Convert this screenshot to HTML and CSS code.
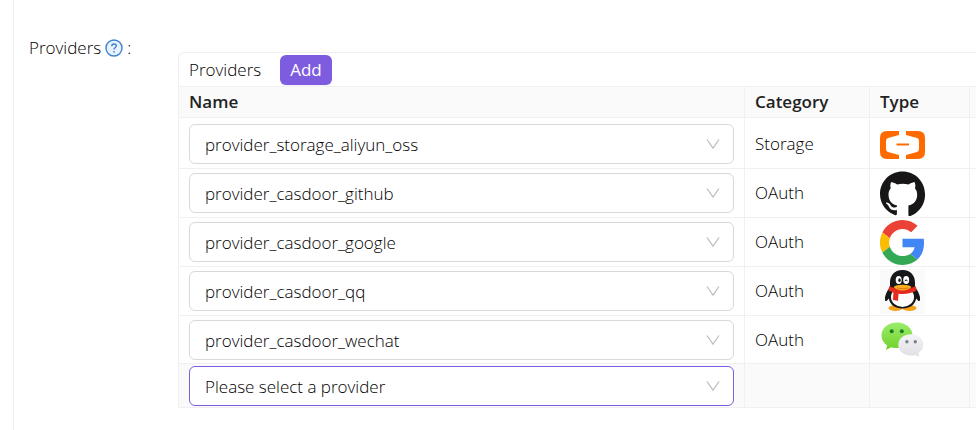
FILE: index.html
```html
<!DOCTYPE html>
<html lang="en">
<head>
<meta charset="utf-8">
<title>Providers</title>
<link rel="stylesheet" href="styles.css">
</head>
<body>
<main class="panel">
  <div class="field-label">Providers
    <svg class="help" viewBox="0 0 18 18" role="img" aria-label="Help"><circle cx="9" cy="9" r="8" fill="#e8f3ff" stroke="#3f82d0" stroke-width="1.4"/><path d="M6.700 7.200C6.700 5.700 7.600 5 9 5s2.300.8 2.300 2C11.300 8.500 9 8.500 9 10.500" fill="none" stroke="#3f82d0" stroke-width="1.4"/><circle cx="9" cy="12.800" r=".9" fill="#3f82d0"/></svg>
    :</div>
  <section class="providers">
    <div class="title"><span>Providers</span><button class="add" type="button">Add</button></div>
    <table>
      <colgroup><col><col class="col-category"><col class="col-type"><col class="col-more"></colgroup>
      <thead><tr><th>Name</th><th>Category</th><th>Type</th><th class="more"></th></tr></thead>
      <tbody>
        <tr class="first">
          <td><div class="select"><select aria-label="Storage provider"><option>provider_storage_aliyun_oss</option></select><svg viewBox="0 0 14 12"><path d="M1 1.500 7 10l6-8.500"/></svg></div></td>
          <td>Storage</td>
          <td><svg class="logo" viewBox="0 0 45 45"><g fill="#ff6a00"><path d="M19 9H7Q0 9 0 16v14q0 7 7 7h12v-4L8 30q-2-.6-2-3v-8q0-2.400 2-3l11-3z"/><path d="M26 9h12q7 0 7 7v14q0 7-7 7H26v-4l11-3q2-.6 2-3v-8q0-2.400-2-3l-11-3z"/><path d="M16.500 21.500h12.500v2H16.500z"/></g></svg></td>
          <td class="more"></td>
        </tr>
        <tr>
          <td><div class="select"><select aria-label="GitHub provider"><option>provider_casdoor_github</option></select><svg viewBox="0 0 14 12"><path d="M1 1.500 7 10l6-8.500"/></svg></div></td>
          <td>OAuth</td>
          <td><svg class="logo" viewBox="0 0 45 45"><path fill="#181617" d="M22.500.5C10 .5 0 10.500 0 23c0 9.900 6.400 18.200 15.400 21.200 1.100.2 1.500-.5 1.500-1.100v-4.200c-6.300 1.400-7.600-2.600-7.600-2.600-1-2.600-2.500-3.300-2.500-3.300-2-1.400.2-1.400.2-1.400 2.200.2 3.400 2.300 3.400 2.300 2 3.500 5.300 2.500 6.600 1.900v-1.400C12 33.800 8.500 30 8.500 23.300c0-2.500.9-4.500 2.300-6-.2-.6-1-2.900.2-6 0 0 1.900-.6 6.200 2.300a21 21 0 0 1 11.300 0c4.300-2.900 6.200-2.300 6.200-2.300 1.200 3.100.4 5.400.2 6a8.700 8.700 0 0 1 2.300 6c0 6.700-3.500 10.500-8.800 11.100v9.700c0 .6.400 1.300 1.500 1.100A22.500 22.500 0 0 0 45 23C45 10.500 35 .5 22.500.5Z"/></svg></td>
          <td class="more"></td>
        </tr>
        <tr>
          <td><div class="select"><select aria-label="Google provider"><option>provider_casdoor_google</option></select><svg viewBox="0 0 14 12"><path d="M1 1.500 7 10l6-8.500"/></svg></div></td>
          <td>OAuth</td>
          <td><svg class="logo" viewBox="0 0 48 48"><path fill="#ea4335" d="M24 9.500c3.540 0 6.710 1.220 9.210 3.600l6.850-6.850C35.900 2.380 30.470 0 24 0 14.620 0 6.510 5.380 2.560 13.220l7.980 6.190C12.430 13.720 17.740 9.500 24 9.500z"/><path fill="#4285f4" d="M46.980 24.550c0-1.570-.15-3.090-.38-4.550H24v9.020h12.940c-.58 2.960-2.260 5.480-4.780 7.180l7.730 6c4.510-4.180 7.090-10.360 7.090-17.650z"/><path fill="#fbbc05" d="M10.530 28.590a14.500 14.500 0 0 1 0-9.180l-7.980-6.190a24 24 0 0 0 0 21.560l7.980-6.190z"/><path fill="#34a853" d="M24 48c6.480 0 11.930-2.130 15.890-5.810l-7.730-6c-2.150 1.450-4.920 2.300-8.160 2.300-6.260 0-11.570-4.220-13.470-9.910l-7.980 6.190C6.510 42.620 14.620 48 24 48z"/></svg></td>
          <td class="more"></td>
        </tr>
        <tr>
          <td><div class="select"><select aria-label="QQ provider"><option>provider_casdoor_qq</option></select><svg viewBox="0 0 14 12"><path d="M1 1.500 7 10l6-8.500"/></svg></div></td>
          <td>OAuth</td>
          <td><svg class="logo" viewBox="0 0 45 45"><path fill="#fafafa" d="M0 0h45v45H0z"/><ellipse cx="15.500" cy="39" rx="7" ry="3" fill="#f5a11b"/><ellipse cx="29.500" cy="39" rx="7" ry="3" fill="#f5a11b"/><path fill="#161719" d="M22.500 1C14 1 10 7 10 13.500v4c-2.500 4-5.500 9-5 13 .2 2.500 1.600 2 3.800-1C10 36 15.300 39.500 22.500 39.500S35 36 36.200 29.500c2.200 3 3.600 3.500 3.800 1 .5-4-2.500-9-5-13v-4C35 7 31 1 22.500 1z"/><ellipse cx="22.500" cy="28" rx="11.500" ry="10" fill="#fff"/><path fill="#e52b1d" d="M9.500 17c8 4.500 18 4.500 26 0l1 4.500c-4.500 2.800-11 4-18 3.300l-.5 7-5-.7.4-7.500-5-2.100z"/><ellipse cx="18.700" cy="11" rx="3" ry="4" fill="#fff"/><ellipse cx="26.200" cy="11" rx="3" ry="4" fill="#fff"/><ellipse cx="19.500" cy="11.200" rx="1.200" ry="1.900" fill="#161719"/><path d="M24.800 12.200q1.400-3 2.600 0" fill="none" stroke="#161719"/><path fill="#fcae1d" d="M13.500 18c3-3 15-3 18 0-4 4.500-14 4.500-18 0z"/><path d="M17 19q5.500 1.500 11 0" fill="none" stroke="#cf6b16" stroke-width=".8"/></svg></td>
          <td class="more"></td>
        </tr>
        <tr class="tight">
          <td><div class="select"><select aria-label="WeChat provider"><option>provider_casdoor_wechat</option></select><svg viewBox="0 0 14 12"><path d="M1 1.500 7 10l6-8.500"/></svg></div></td>
          <td>OAuth</td>
          <td><svg class="logo" viewBox="0 0 45 45"><defs><linearGradient id="green" x2="0" y2="1"><stop stop-color="#9bec69"/><stop offset="1" stop-color="#70d22b"/></linearGradient><linearGradient id="silver" x2="0" y2="1"><stop stop-color="#f4f4f7"/><stop offset="1" stop-color="#dfdfe5"/></linearGradient></defs><path fill="url(#green)" d="M17 5.500C8 5.500 1.500 11 1.500 18.500c0 4.500 2.200 7.500 5.700 10L6 33l5.200-2.800c1.800.6 3.700.9 5.800.9 8.800 0 15.500-5.200 15.500-12.600S25.800 5.500 17 5.500z"/><circle cx="11.700" cy="14.300" r="2" fill="#187e28"/><circle cx="21.800" cy="14.300" r="2" fill="#187e28"/><path fill="url(#silver)" d="M31 17.300c-7.300 0-12.700 4.500-12.700 10.700S23.700 38.500 31 38.500c1.600 0 3-.2 4.300-.6l4 1.900-.9-3.800c3-2 4.900-4.700 4.900-8 0-6.200-5-10.700-12.300-10.700z"/><circle cx="26.900" cy="24.700" r="1.700" fill="#7c8186"/><circle cx="35.300" cy="24.700" r="1.700" fill="#7c8186"/></svg></td>
          <td class="more"></td>
        </tr>
        <tr class="pending">
          <td><div class="select"><select class="active" aria-label="New provider"><option>Please select a provider</option></select><svg viewBox="0 0 14 12"><path d="M1 1.500 7 10l6-8.500"/></svg></div></td>
          <td></td><td></td><td class="more"></td>
        </tr>
      </tbody>
    </table>
  </section>
</main>
</body>
</html>
```
FILE: styles.css
```css
* { box-sizing: border-box; }
body {
  margin: 0;
  background: #fff;
  color: #000;
  font: 300 17px/24px "Open Sans", "Noto Sans", sans-serif;
}
.panel {
  display: grid;
  grid-template-columns: 149px minmax(0, 1fr);
  min-height: 100vh;
  margin-left: 13px;
  padding-left: 15px;
  border-left: 1px solid #f0f0f0;
}
.field-label {
  display: flex;
  gap: 4px;
  align-items: center;
  align-self: start;
  margin-top: 36px;
}
.help { width: 18px; height: 18px; }
.providers {
  align-self: start;
  margin-top: 52px;
  border: solid #f0f0f0;
  border-width: 1px 0 0 1px;
  border-top-left-radius: 6px;
}
.title {
  display: flex;
  align-items: center;
  gap: 19px;
  height: 34px;
  padding-left: 10px;
  border-bottom: 1px solid #f0f0f0;
}
.add {
  height: 30px;
  padding: 0 10px;
  border: 0;
  border-radius: 6px;
  background: #7e5ce0;
  color: #fff;
  font: inherit;
  font-weight: 400;
  box-shadow: 0 2px 0 #f5f2fd;
}
table {
  width: 100%;
  table-layout: fixed;
  border-collapse: separate;
  border-spacing: 0;
}
.col-category { width: 125px; }
.col-type { width: 100px; }
.col-more { width: 6px; }
th, td {
  padding: 0 10px;
  border: solid #f0f0f0;
  border-width: 0 1px 1px 0;
  text-align: left;
  vertical-align: middle;
}
th {
  height: 31px;
  background: #fafafa;
  color: #222;
  font-weight: 600;
}
td { height: 49px; }
.first td { height: 51px; padding-top: 2px; }
.tight td { height: 48px; }
.pending td { height: 44px; background: #fafafa; }
th.more, td.more { padding: 0; border-right: 0; }
.select { position: relative; }
.select svg {
  position: absolute;
  top: 14px;
  right: 14px;
  width: 14px;
  height: 12px;
  fill: none;
  stroke: #bfbfbf;
  stroke-width: 1.3;
  pointer-events: none;
}
select {
  display: block;
  width: 100%;
  height: 40px;
  padding: 2px 36px 0 15px;
  appearance: none;
  border: 1px solid #d9d9d9;
  border-radius: 6px;
  background: #fff;
  color: inherit;
  font: inherit;
}
.active { border-color: #7e5ce0; }
.logo { display: block; width: 45px; height: 45px; }
```
